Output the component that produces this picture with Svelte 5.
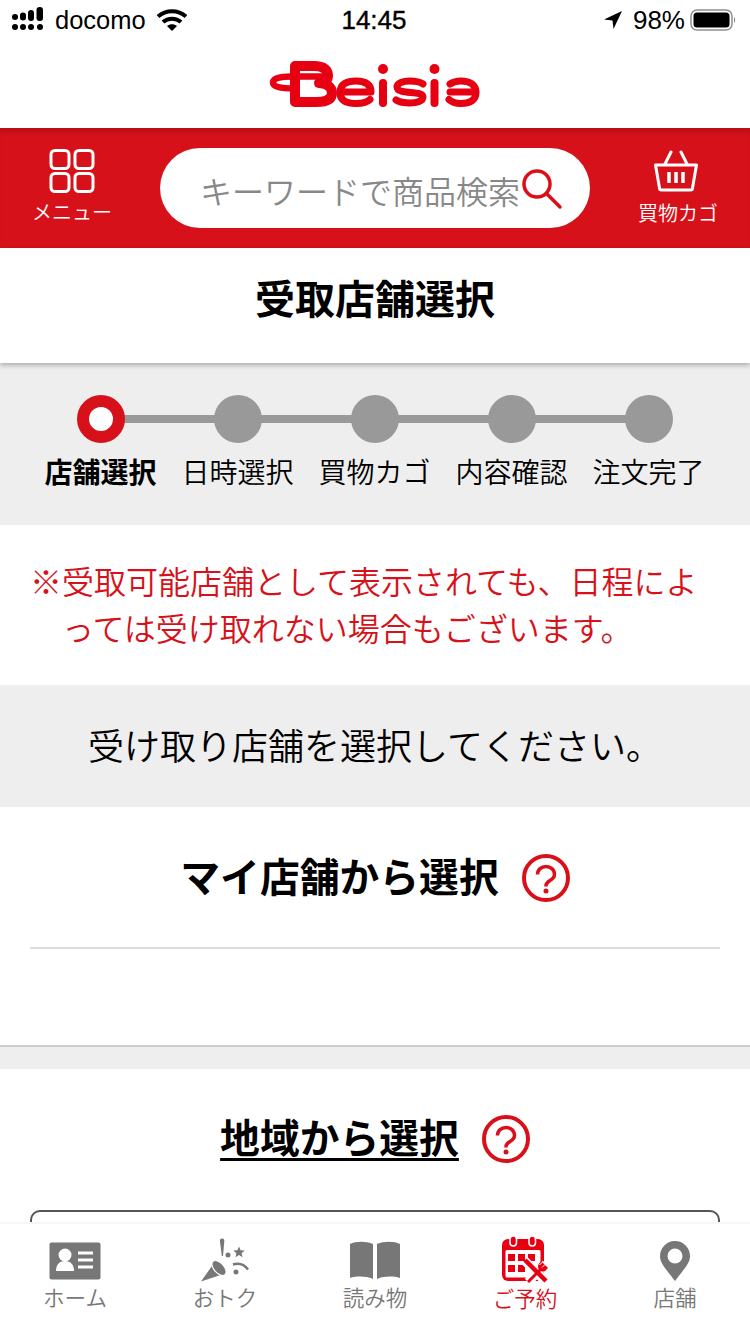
<script>
  const steps = ['店舗選択', '日時選択', '買物カゴ', '内容確認', '注文完了'];
</script>

{#snippet help()}
  <svg class="help" width="48" height="48" viewBox="0 0 48 48" fill="none" stroke="#d9101a">
    <circle cx="24" cy="24" r="22" stroke-width="4"/>
    <path d="M15.500 20.500c0-5 4-8 8.500-8s8.500 3 8.500 8c0 6-8.500 6-8.500 11v1" stroke-width="3.500"/>
    <circle cx="24" cy="37" r="2.500" fill="#d9101a" stroke="none"/>
  </svg>
{/snippet}

<div class="page">
  <div class="status">
    <div class="status-side">
      <svg class="signal" width="35" height="26" viewBox="0 0 35 26" fill="#000">
        <circle cx="3" cy="10" r="3"/><circle cx="3" cy="20" r="3"/>
        <rect x="8" y="5.500" width="6" height="8" rx="3"/><circle cx="11" cy="20" r="3"/>
        <rect x="16" y="3" width="6" height="11" rx="3"/><circle cx="19" cy="20" r="3"/>
        <rect x="24.500" y="0" width="6.500" height="14" rx="3"/><circle cx="28" cy="20" r="3"/>
      </svg>
      <span class="carrier">docomo</span>
      <svg class="wifi" width="32" height="24" viewBox="0 0 32 24" fill="none" stroke="#000" stroke-width="4">
        <path d="M2 8.500C10 1.500 22 1.500 30 8.500"/>
        <path d="M7 14C12 9.500 20 9.500 25 14"/>
        <path d="M16 23l-5-5c3-2.500 7-2.500 10 0z" fill="#000" stroke="none"/>
      </svg>
    </div>
    <span class="time">14:45</span>
    <div class="status-side right">
      <svg width="20" height="20" viewBox="0 0 20 20" fill="#000"><path d="M19 1L1 9.500l8.500 1 1 8.500z"/></svg>
      <span class="pct">98%</span>
      <svg width="46" height="24" viewBox="0 0 46 24">
        <rect x="1" y="2" width="41" height="20" rx="6" fill="none" stroke="#8e8e8e" stroke-width="1.500"/>
        <rect x="3.500" y="4.500" width="36" height="15" rx="3.500" fill="#000"/>
        <path d="M44 9c1.500.5 1.500 5.500 0 6z" fill="#8e8e8e"/>
      </svg>
    </div>
  </div>

  <header class="logo-bar">
    <svg class="logo" width="212" height="50" viewBox="269 59 212 50" fill="none" stroke="#e60012" stroke-width="8" stroke-linecap="round" stroke-linejoin="round">
      <path d="M295 66h19c10 0 14 4 14 9.500 0 5-4 7-9 7.500 8 .5 13 4 13 10 0 6-5 9-16 9h-21z" stroke-width="10"/>
      <path d="M322 76.500H292c-12 0-19 2-19 6s6 6 22 6" stroke-width="6.500"/>
      <path d="M341 92h30c0-8-6-11-15-11s-16 3-16 11.500 7 11 16 11c6 0 11-1 14-4" stroke-width="7"/>
      <path d="M383 83v20"/>
      <circle cx="383" cy="69" r="5" fill="#e60012" stroke="none"/>
      <path d="M423 84c-3-2-8-3-13-3-7 0-13 2-13 6 0 8 26 3 26 10 0 4-6 6-13 6-6 0-11-1-14-3" stroke-width="7"/>
      <path d="M434.500 83v20"/>
      <circle cx="434.500" cy="69" r="5" fill="#e60012" stroke="none"/>
      <path d="M450 92h26M450 84c3-2 6-3 11-3 9 0 15 4 15 11.500s-6 11-15 11c-5 0-9-1-12-4" stroke-width="7"/>
    </svg>
  </header>

  <div class="red-bar">
    <div class="bar-item menu">
      <svg width="46" height="44" viewBox="0 0 46 44" fill="none" stroke="#fff" stroke-width="3">
        <rect x="2" y="1.500" width="18" height="18" rx="4"/><rect x="26" y="1.500" width="18" height="18" rx="4"/>
        <rect x="2" y="24.500" width="18" height="18" rx="4"/><rect x="26" y="24.500" width="18" height="18" rx="4"/>
      </svg>
      <span>メニュー</span>
    </div>
    <div class="search">
      <span class="placeholder">キーワードで商品検索</span>
      <svg class="search-icon" width="42" height="42" viewBox="0 0 42 42" fill="none" stroke="#d9101a" stroke-width="3.500" stroke-linecap="round">
        <circle cx="16" cy="16" r="13"/><path d="M26 26l13 13"/>
      </svg>
    </div>
    <div class="bar-item basket">
      <svg width="46" height="42" viewBox="0 0 46 42" fill="none" stroke="#fff" stroke-width="3" stroke-linejoin="round">
        <path d="M2.500 15h41l-4 23a2 2 0 0 1-2 2H8.500a2 2 0 0 1-2-2z"/>
        <path d="M12 14L18 2M34 14L28 2" stroke-linecap="round"/>
        <path d="M16 22v11M23 22v11M30 22v11" stroke-width="3.500"/>
      </svg>
      <span>買物カゴ</span>
    </div>
  </div>

  <h1 class="page-title">受取店舗選択</h1>

  <section class="stepper">
    <ol class="steps">
      {#each steps as step, i}
        <li class="step" class:active={i === 0} class:last={i === steps.length - 1}>
          <span class="dot"></span>
          <span class="step-label">{step}</span>
        </li>
      {/each}
    </ol>
  </section>

  <p class="notice">※受取可能店舗として表示されても、日程によ<br />っては受け取れない場合もございます。</p>

  <p class="banner">受け取り店舗を選択してください。</p>

  <section class="my-store">
    <div class="section-head">
      <h2>マイ店舗から選択</h2>
      {@render help()}
    </div>
    <div class="divider"></div>
  </section>

  <div class="gap-band"></div>

  <section class="region">
    <div class="section-head">
      <h2 class="underlined">地域から選択</h2>
      {@render help()}
    </div>
    <div class="select-box"></div>
  </section>

  <nav class="tabs">
    <div class="tab">
      <svg width="52" height="38" viewBox="0 0 52 38">
        <rect x="0.500" y="0.500" width="51" height="37" rx="2" fill="#777"/>
        <circle cx="16" cy="13" r="6.500" fill="#fff"/>
        <path d="M7 29c0-7 4-10 9-10s9 3 9 10z" fill="#fff"/>
        <path d="M29 11h15M29 18h15M29 25h15" stroke="#fff" stroke-width="3"/>
      </svg>
      <span>ホーム</span>
    </div>
    <div class="tab low2">
      <svg width="52" height="44" viewBox="0 0 52 44" fill="#777">
        <path d="M2 43.500L15 25l11 10.500z"/>
        <ellipse cx="20" cy="30" rx="5" ry="9" transform="rotate(-42 20 30)" stroke="#fff" stroke-width="1.200"/>
        <path d="M23 0.500c1.800 0 2.500 1.200 2.300 3l-1.300 14.500h-1.200L21 4c-.3-2 .2-3.500 2-3.500z"/>
        <circle cx="29" cy="17" r="2.500"/>
        <path d="M40 8.500l1.600 3.800 4.100.3-3.100 2.700 1 4-3.600-2.200-3.600 2.200 1-4-3.100-2.700 4.100-.3z"/>
        <circle cx="37" cy="34" r="2.500"/>
        <path d="M34 26.500c6-2 11-.5 15 5" fill="none" stroke="#777" stroke-width="2.500"/>
      </svg>
      <span>おトク</span>
    </div>
    <div class="tab">
      <svg width="50" height="40" viewBox="0 0 50 40" fill="#777">
        <path d="M0 4c6-3 16-3 23 0v35c-7-3-16-3-23-1z"/>
        <path d="M50 4c-6-3-16-3-23 0v35c7-3 16-3 23-1z"/>
      </svg>
      <span>読み物</span>
    </div>
    <div class="tab reserved">
      <svg width="50" height="48" viewBox="0 0 50 48">
        <rect x="2" y="3" width="42" height="42" rx="6" fill="#e60012"/>
        <rect x="10" y="0" width="6.500" height="10" rx="3.200" fill="#e60012" stroke="#fff" stroke-width="1.500"/>
        <rect x="29" y="0" width="6.500" height="10" rx="3.200" fill="#e60012" stroke="#fff" stroke-width="1.500"/>
        <rect x="5.500" y="14" width="35" height="27.500" rx="1.500" fill="#fff"/>
        <g fill="#e60012">
          <rect x="8" y="18" width="7" height="7"/><rect x="18" y="18" width="7" height="7"/><rect x="28" y="18" width="7" height="7"/>
          <rect x="8" y="29" width="7" height="7"/><rect x="18" y="29" width="7" height="7"/>
        </g>
        <path d="M28 46l18-18M25 25l20 20" stroke="#fff" stroke-width="9"/>
        <path d="M28 46l16-16" stroke="#e60012" stroke-width="3"/>
        <path d="M41 25l7 7-3 3c-2 1-4 .5-5.500-1s-2-3.500-1-5.500z" fill="#e60012"/>
        <path d="M42.500 26l-3 3M45 28.500l-3 3" stroke="#fff" stroke-width="1"/>
        <path d="M25 24l21 21" stroke="#e60012" stroke-width="4.500"/>
      </svg>
      <span>ご予約</span>
    </div>
    <div class="tab low2">
      <svg width="32" height="42" viewBox="0 0 32 42">
        <path d="M16 41C8 30 1 24 1 16a15 15 0 0 1 30 0c0 8-7 14-15 25z" fill="#777"/>
        <circle cx="16" cy="16" r="7.500" fill="#fff"/>
      </svg>
      <span>店舗</span>
    </div>
  </nav>
</div>

<style>
  :global(body) {
    margin: 0;
    background: #fff;
  }
  .page {
    position: relative;
    width: 750px;
    height: 1334px;
    overflow: hidden;
    background: #fff;
    font-family: "Noto Sans CJK JP", "Liberation Sans", sans-serif;
    font-weight: 350;
    color: #000;
  }
  .status {
    height: 40px;
    padding: 0 14px 0 12px;
    display: grid;
    grid-template-columns: 1fr auto 1fr;
    align-items: center;
    font-family: "Liberation Sans", sans-serif;
    font-weight: 400;
    font-size: 26px;
  }
  .status-side {
    display: flex;
    align-items: center;
    gap: 8px;
  }
  .status-side.right {
    justify-content: flex-end;
    gap: 5px;
  }
  .carrier {
    font-size: 25.500px;
    margin-right: 2px;
  }
  .time {
    -webkit-text-stroke: 0.4px #000;
  }
  .pct {
    margin-left: 5px;
  }
  .logo-bar {
    height: 88px;
    display: flex;
    align-items: center;
    justify-content: center;
  }
  .red-bar {
    height: 120px;
    background: #d7111a;
    box-shadow: inset 0 7px 6px -4px rgba(0, 0, 0, 0.18);
    display: grid;
    grid-template-columns: 160px 430px 160px;
    align-items: center;
    color: #fff;
  }
  .bar-item {
    display: flex;
    flex-direction: column;
    align-items: center;
    align-self: start;
    font-size: 20px;
    line-height: 24px;
  }
  .bar-item.menu {
    gap: 7px;
    padding: 21px 16px 0 0;
  }
  .bar-item.basket {
    gap: 9px;
    padding: 22px 0 0 12px;
  }
  .bar-item.basket span {
    margin-left: 4px;
  }
  .search {
    height: 80px;
    background: #fff;
    border-radius: 40px;
    display: flex;
    align-items: center;
    padding-left: 40px;
    position: relative;
  }
  .placeholder {
    font-size: 32px;
    line-height: 44px;
    padding-top: 4px;
    color: #888;
    white-space: nowrap;
  }
  .search-icon {
    position: absolute;
    left: 361px;
    top: 20px;
  }
  .page-title {
    position: relative;
    height: 115px;
    margin: 0;
    box-sizing: border-box;
    padding-top: 18px;
    text-align: center;
    font-size: 40px;
    line-height: 62px;
    font-weight: 700;
    background: #fff;
    box-shadow: 0 2px 5px rgba(0, 0, 0, 0.3);
  }
  .stepper {
    height: 162px;
    background: #eee;
    box-sizing: border-box;
    padding-top: 32px;
  }
  .steps {
    list-style: none;
    margin: 0;
    padding: 0 0 0 32px;
    display: flex;
  }
  .step {
    position: relative;
    width: 137px;
    display: flex;
    flex-direction: column;
    align-items: center;
    gap: 8px;
  }
  .step::after {
    content: '';
    position: absolute;
    left: 50%;
    top: 20px;
    width: 137px;
    height: 8px;
    background: #999;
  }
  .step.last::after {
    display: none;
  }
  .dot {
    position: relative;
    z-index: 1;
    width: 48px;
    height: 48px;
    border-radius: 50%;
    background: #999;
    box-sizing: border-box;
  }
  .active .dot {
    background: #fff;
    border: 12px solid #d7111a;
  }
  .step-label {
    font-size: 28px;
    line-height: 40px;
    white-space: nowrap;
  }
  .active .step-label {
    font-weight: 700;
  }
  .notice {
    height: 160px;
    margin: 0;
    box-sizing: border-box;
    padding: 32px 0 0 62px;
    text-indent: -32px;
    font-size: 32px;
    line-height: 47px;
    color: #d7111a;
    white-space: nowrap;
  }
  .banner {
    height: 122px;
    margin: 0;
    background: #eee;
    font-size: 36px;
    line-height: 118px;
    text-align: center;
  }
  .my-store {
    height: 240px;
    box-sizing: border-box;
    padding-top: 41px;
    border-bottom: 2px solid #ccc;
  }
  .gap-band {
    height: 22px;
    background: #eee;
  }
  .section-head {
    display: flex;
    align-items: center;
    justify-content: center;
    gap: 23px;
    height: 60px;
  }
  h2 {
    margin: 0 0 6px;
    font-size: 39.800px;
    line-height: 60px;
    font-weight: 700;
  }
  .underlined {
    text-decoration: underline;
    text-decoration-thickness: 3px;
    text-underline-offset: 5px;
  }
  .help {
    flex: none;
  }
  .divider {
    height: 2px;
    margin: 39px 30px 0;
    background: #ddd;
  }
  .region {
    padding-top: 40px;
    height: 300px;
    box-sizing: border-box;
  }
  .select-box {
    margin: 41px 30px 0;
    height: 80px;
    border: 2.500px solid #555;
    border-radius: 10px;
  }
  .tabs {
    position: absolute;
    left: 0;
    right: 0;
    bottom: 0;
    height: 112px;
    box-sizing: border-box;
    background: #fff;
    border-top: 2px solid #f6f6f6;
    display: grid;
    grid-template-columns: repeat(5, 150px);
  }
  .tab {
    height: 88px;
    display: flex;
    flex-direction: column;
    align-items: center;
    justify-content: flex-end;
    gap: 2px;
    font-size: 21.500px;
    line-height: 30px;
    color: #777;
  }
  .tab.low2 svg {
    margin-bottom: -2px;
  }
  .tab.reserved svg {
    margin-bottom: -3px;
  }
  .tab.reserved {
    color: #d7111a;
    transform: translateY(1px);
  }
</style>
